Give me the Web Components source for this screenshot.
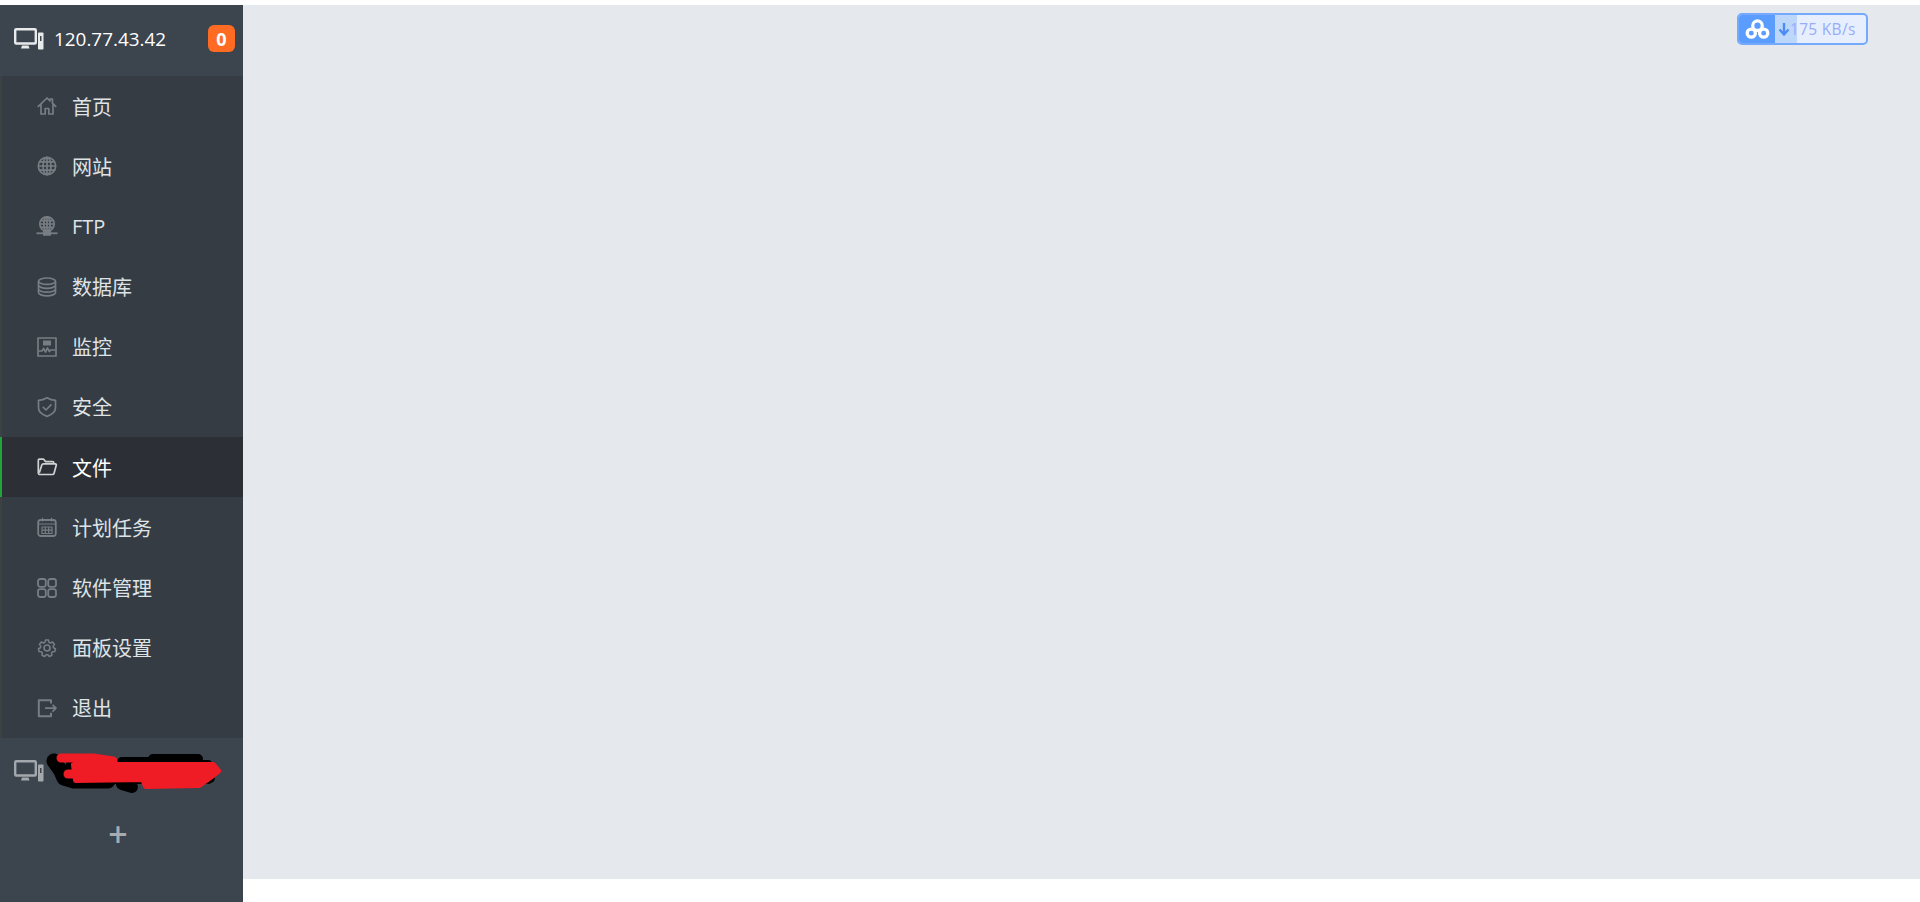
<!DOCTYPE html>
<html lang="zh-CN">
<head>
<meta charset="utf-8">
<title>宝塔面板</title>
<style>
html,body{margin:0;height:100%;background:#fff;overflow:hidden}
body{font-family:"Open Sans","Noto Sans CJK SC",sans-serif}
</style>
</head>
<body>
<panel-app>
  <panel-sidebar slot="side">
    <server-head slot="head" ip="120.77.43.42" count="0"></server-head>
    <nav-item icon="home">首页</nav-item>
    <nav-item icon="globe">网站</nav-item>
    <nav-item icon="ftp">FTP</nav-item>
    <nav-item icon="db">数据库</nav-item>
    <nav-item icon="monitor">监控</nav-item>
    <nav-item icon="shield">安全</nav-item>
    <nav-item icon="folder" active>文件</nav-item>
    <nav-item icon="calendar">计划任务</nav-item>
    <nav-item icon="apps">软件管理</nav-item>
    <nav-item icon="gear">面板设置</nav-item>
    <nav-item icon="exit">退出</nav-item>
    <server-foot slot="foot"></server-foot>
  </panel-sidebar>
  <speed-badge slot="main" speed="175 KB/s"></speed-badge>
</panel-app>
<script>
const ICONS={
home:'<path d="M.8 10.800 10 2l3 2.800V3h2.400v4.200L19.200 10.800M4 8.400V18h4.200v-5.500h3.600V18H16V8.400"/>',
globe:'<circle cx="10" cy="10" r="8.700"/><ellipse cx="10" cy="10" rx="4" ry="8.700"/><path d="M10 1.300v17.400M1.300 10h17.400M2.500 5.800h15M2.500 14.200h15"/>',
ftp:'<circle cx="10" cy="8" r="7.200"/><ellipse cx="10" cy="8" rx="3.200" ry="7.200"/><path d="M10 1v14M2.800 8h14.400M3.800 4.600h12.400M3.800 11.400h12.400"/><path d="M-.5 17.300h21" stroke-width="1.800"/><rect x="6.800" y="15.400" width="6.400" height="3.600" fill="currentColor"/>',
db:'<ellipse cx="10" cy="4.200" rx="8.500" ry="3.200"/><path d="M1.500 4.200v11.400c0 1.800 3.800 3.200 8.500 3.200s8.500-1.400 8.500-3.200V4.200M1.500 8.100c0 1.800 3.800 3.200 8.500 3.200s8.500-1.400 8.500-3.200M1.500 12c0 1.800 3.800 3.200 8.500 3.200s8.500-1.400 8.500-3.200"/>',
monitor:'<rect x="1" y="1" width="18" height="18"/><rect x="6" y="3.500" width="8" height="5" fill="currentColor" stroke="none"/><path d="M1.500 14H5l1.600-2.500 2 3.500 1.800-4 2 3.500 1.300-1.500h4.800"/>',
shield:'<path d="M10 .8c2.600 1.600 5.600 2.400 8.500 2.500v7.500c0 3.800-3.400 6.800-8.500 8.600-5.100-1.800-8.500-4.800-8.500-8.600V3.300C4.400 3.200 7.400 2.400 10 .8z"/><path d="m5.800 9.800 3.200 3.200 5.400-5.600"/>',
folder:'<path d="M3 17.500h12.500c.8 0 1.300-.4 1.500-1.100l2.300-8.300c.2-.8-.2-1.300-1-1.300H6.300c-.7 0-1.200.4-1.400 1L2.300 15.800"/><path d="M1.300 15.800V3.300c0-.7.4-1.100 1.100-1.100h4.200l2 2.400h7.100c.7 0 1 .4 1 1v1.200M3 17.500c-1 0-1.700-.7-1.700-1.700"/>',
calendar:'<rect x="1.200" y="3" width="17.600" height="16" rx="2.500" stroke-width="1.800"/><path d="M5.500 .8v3.600M14.500 .8v3.600M1.200 7h17.600M5 10h10v6.500H5zM5 13.200h10M8.300 10v6.500M11.700 10v6.500" stroke-width="1.200"/>',
apps:'<rect x="1" y="1" width="7.800" height="7.800" rx="2.200" stroke-width="1.800"/><rect x="11.200" y="1" width="7.800" height="7.800" rx="2.200" stroke-width="1.800"/><rect x="1" y="11.200" width="7.800" height="7.800" rx="2.200" stroke-width="1.800"/><rect x="11.200" y="11.200" width="7.800" height="7.800" rx="2.200" stroke-width="1.800"/>',
gear:'<circle cx="10" cy="10" r="3"/><path d="M8.300 1.200h3.400l.5 2.500 1.700.8 2.300-1.200 2.100 2.500-1.500 2.100.4 1.800 2.200 1.100-.7 3.200-2.500.1-1.200 1.500.5 2.400-3 1.400-1.600-2-1.900 0-1.600 2-3-1.400.5-2.400-1.200-1.500-2.500-.1-.7-3.200 2.200-1.100.4-1.800L1.600 5.800l2.100-2.500L6 4.500l1.700-.8z" transform="translate(1 1) scale(.9)"/>',
exit:'<path d="M14 5.500V2.200H1.800v16H14v-3.500" stroke-width="2"/><path d="M8 10.200h11M15.500 6.800l3.500 3.400-3.500 3.400"/>'
};

class PanelApp extends HTMLElement{
  constructor(){super();this.attachShadow({mode:'open'}).innerHTML=`<style>
  :host{display:grid;grid-template-columns:243px 1fr;grid-template-rows:5px 874px 23px;width:1920px;height:902px;background:#fff}
  .side{grid-column:1;grid-row:2/4;display:block;min-height:0}
  .main{grid-column:2;grid-row:2;background:#e5e8ed;position:relative}
  </style><div class="side"><slot name="side"></slot></div><div class="main"><slot name="main"></slot></div>`}
}
class PanelSidebar extends HTMLElement{
  constructor(){super();this.attachShadow({mode:'open'}).innerHTML=`<style>
  :host{display:flex;flex-direction:column;height:897px;background:#3c444d}
  .menu{display:grid;grid-template-rows:repeat(11,1fr);height:662px;background:#353c44;border-left:2px solid #3d4144;box-sizing:border-box}
  </style><slot name="head"></slot><div class="menu"><slot></slot></div><slot name="foot"></slot>`}
}
const PC=(c)=>`<svg width="30" height="22" viewBox="0 0 30 22" fill="none" style="display:block;color:${c}">
<rect x="1.200" y="1.200" width="20.600" height="14.300" rx="1" stroke="currentColor" stroke-width="2.400"/>
<path d="M7 20.500h8.500l-1-3H8z" fill="currentColor"/>
<rect x="24" y="4.500" width="5.500" height="17" rx=".8" fill="currentColor"/>
<rect x="26" y="8" width="1.500" height="5" fill="#3c444d"/></svg>`;
class ServerHead extends HTMLElement{
  constructor(){super();this.attachShadow({mode:'open'}).innerHTML=`<style>
  :host{display:flex;align-items:center;height:71px;padding:0 8px 4px 14px;box-sizing:border-box;color:#fff;font-size:18.900px}
  .ip{margin-left:10px;flex:1;white-space:nowrap}
  .badge{width:27px;height:27px;border-radius:6px;background:#ff6b22;font-weight:700;font-size:18px;display:flex;align-items:center;justify-content:center}
  </style>${PC('#e8eaeb')}<span class="ip">${this.getAttribute('ip')}</span><span class="badge">${this.getAttribute('count')}</span>`}
}
class NavItem extends HTMLElement{
  constructor(){super();this.attachShadow({mode:'open'}).innerHTML=`<style>
  :host{display:flex;align-items:center;padding-left:35px;font-size:20px;color:#dfe3e6;position:relative;white-space:nowrap;min-width:0}
  :host([active]){background:#2c2f36;color:#fff;box-shadow:-2px 0 0 #20a53a}
  svg{width:20px;height:20px;flex:none;color:#787d83;margin-right:15px;overflow:visible}
  :host([active]) svg{color:#cfd1d3}
  </style><svg viewBox="0 0 20 20" fill="none" stroke="currentColor" stroke-width="1.700" stroke-linejoin="round">${ICONS[this.getAttribute('icon')]}</svg><slot></slot>`}
}
class ServerFoot extends HTMLElement{
  constructor(){super();this.attachShadow({mode:'open'}).innerHTML=`<style>
  :host{display:block;position:relative;flex:1}
  .row{display:flex;align-items:center;height:58px;padding:8px 14px 0;box-sizing:border-box}
  .add{display:block;text-align:center;width:236px;font-size:34px;line-height:40px;margin-top:18px;color:#a5abb0;font-weight:600}
  .scrib{position:absolute;left:0;top:0;pointer-events:none}
  </style>
  <div class="row">${PC('#a3a8ad')}</div>
  <span class="add">+</span>
  <svg class="scrib" width="243" height="70" viewBox="0 738 243 70" fill="none" stroke-linecap="round" stroke-linejoin="round">
    <g stroke="#000">
      <path d="M70 764H208V780H70z" fill="#000" stroke-width="8"/>
      <path d="M54 761 61 771 64 778 74 781 108 781" stroke-width="15"/>
      <path d="M122 762H150" stroke-width="10"/>
      <path d="M153 759H198" stroke-width="10"/>
      <path d="M122 784 132 787" stroke-width="12"/>
      <path d="M208 778 210 778" stroke-width="10"/>
    </g>
    <g stroke="#ef1c25" fill="#ef1c25">
      <path d="M61 758H93L113 761" stroke-width="9"/>
      <path d="M68 774H80" stroke-width="9"/>
      <path d="M74 765 113 765 213 765 218 771 213 775 199 785 146 786 143 779 76 780z" stroke-width="6"/>
    </g>
  </svg>`}
}
class SpeedBadge extends HTMLElement{
  constructor(){super();this.attachShadow({mode:'open'}).innerHTML=`<style>
  :host{position:absolute;left:1494px;top:8px;width:131px;height:32px;box-sizing:border-box;display:flex;border:2px solid #74a9fb;border-radius:5px;background:#e7efff;overflow:hidden;font-size:15.500px;font-weight:500;color:#97acfa}
  .logo{width:36px;background:#5b9dff;display:flex;align-items:center;justify-content:center;flex:none}
  .bar{position:absolute;left:36px;top:0;bottom:0;width:22px;background:#bdd7fb}
  .txt{position:relative;display:flex;align-items:center;margin-left:3px;white-space:nowrap;letter-spacing:.3px}
  .txt svg{margin-right:0}
  </style>
  <div class="logo"><svg width="25" height="21" viewBox="0 0 26 22" fill="none" stroke="#fff" stroke-width="3.400"><circle cx="13" cy="7" r="5"/><circle cx="6.500" cy="14.800" r="4.300"/><circle cx="19.500" cy="14.800" r="4.300"/></svg></div>
  <div class="bar"></div>
  <div class="txt"><svg width="12" height="14" viewBox="0 0 12 14"><path d="M6 1v11M1.500 7.500 6 12.500l4.500-5" fill="none" stroke="#4d8cf5" stroke-width="2.400"/></svg>${this.getAttribute('speed')}</div>`}
}
customElements.define('panel-app',PanelApp);
customElements.define('panel-sidebar',PanelSidebar);
customElements.define('server-head',ServerHead);
customElements.define('nav-item',NavItem);
customElements.define('server-foot',ServerFoot);
customElements.define('speed-badge',SpeedBadge);
</script>
</body>
</html>
